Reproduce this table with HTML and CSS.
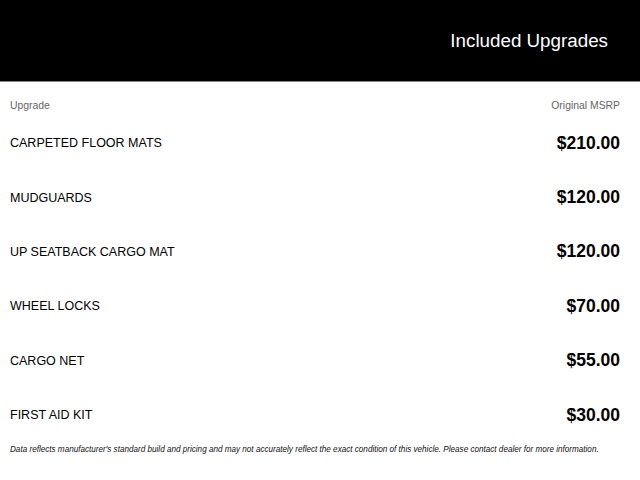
FILE: index.html
```html
<!DOCTYPE html>
<html>
<head>
<meta charset="utf-8">
<link rel="stylesheet" href="styles.css">
</head>
<body>
<header class="banner"><h1 class="title">Included Upgrades</h1></header>
<main class="content">
  <div class="colhead"><span>Upgrade</span><span>Original MSRP</span></div>
  <div class="row"><span class="name">CARPETED FLOOR MATS</span><span class="price">$210.00</span></div>
  <div class="row"><span class="name">MUDGUARDS</span><span class="price">$120.00</span></div>
  <div class="row"><span class="name">UP SEATBACK CARGO MAT</span><span class="price">$120.00</span></div>
  <div class="row"><span class="name">WHEEL LOCKS</span><span class="price">$70.00</span></div>
  <div class="row"><span class="name">CARGO NET</span><span class="price">$55.00</span></div>
  <div class="row"><span class="name">FIRST AID KIT</span><span class="price">$30.00</span></div>
  <p class="note">Data reflects manufacturer's standard build and pricing and may not accurately reflect the exact condition of this vehicle. Please contact dealer for more information.</p>
</main>
</body>
</html>
```
FILE: styles.css
```css
html, body { margin: 0; padding: 0; background: #fff; }
body { font-family: "Liberation Sans", Arial, sans-serif; color: #000; width: 640px; }
.banner {
  background: #000;
  height: 81px;
  border-bottom: 1px solid #888;
  display: flex;
  align-items: center;
  justify-content: flex-end;
  padding-right: 32px;
}
.title { margin: 0; font-weight: normal; color: #fff; font-size: 18.8px; }
.content { padding: 0 20px 0 10px; }
.colhead {
  display: flex;
  justify-content: space-between;
  font-size: 10.4px;
  line-height: 14px;
  color: #666;
  padding-top: 17px;
  height: 17px;
}
.row {
  display: flex;
  justify-content: space-between;
  align-items: center;
  height: 54.4px;
}
.name { font-size: 12.5px; }
.price { font-size: 17.5px; font-weight: bold; }
.note { margin: 4px 0 0; font-size: 8.15px; font-style: italic; color: #111; line-height: 8px; white-space: nowrap; }
```
